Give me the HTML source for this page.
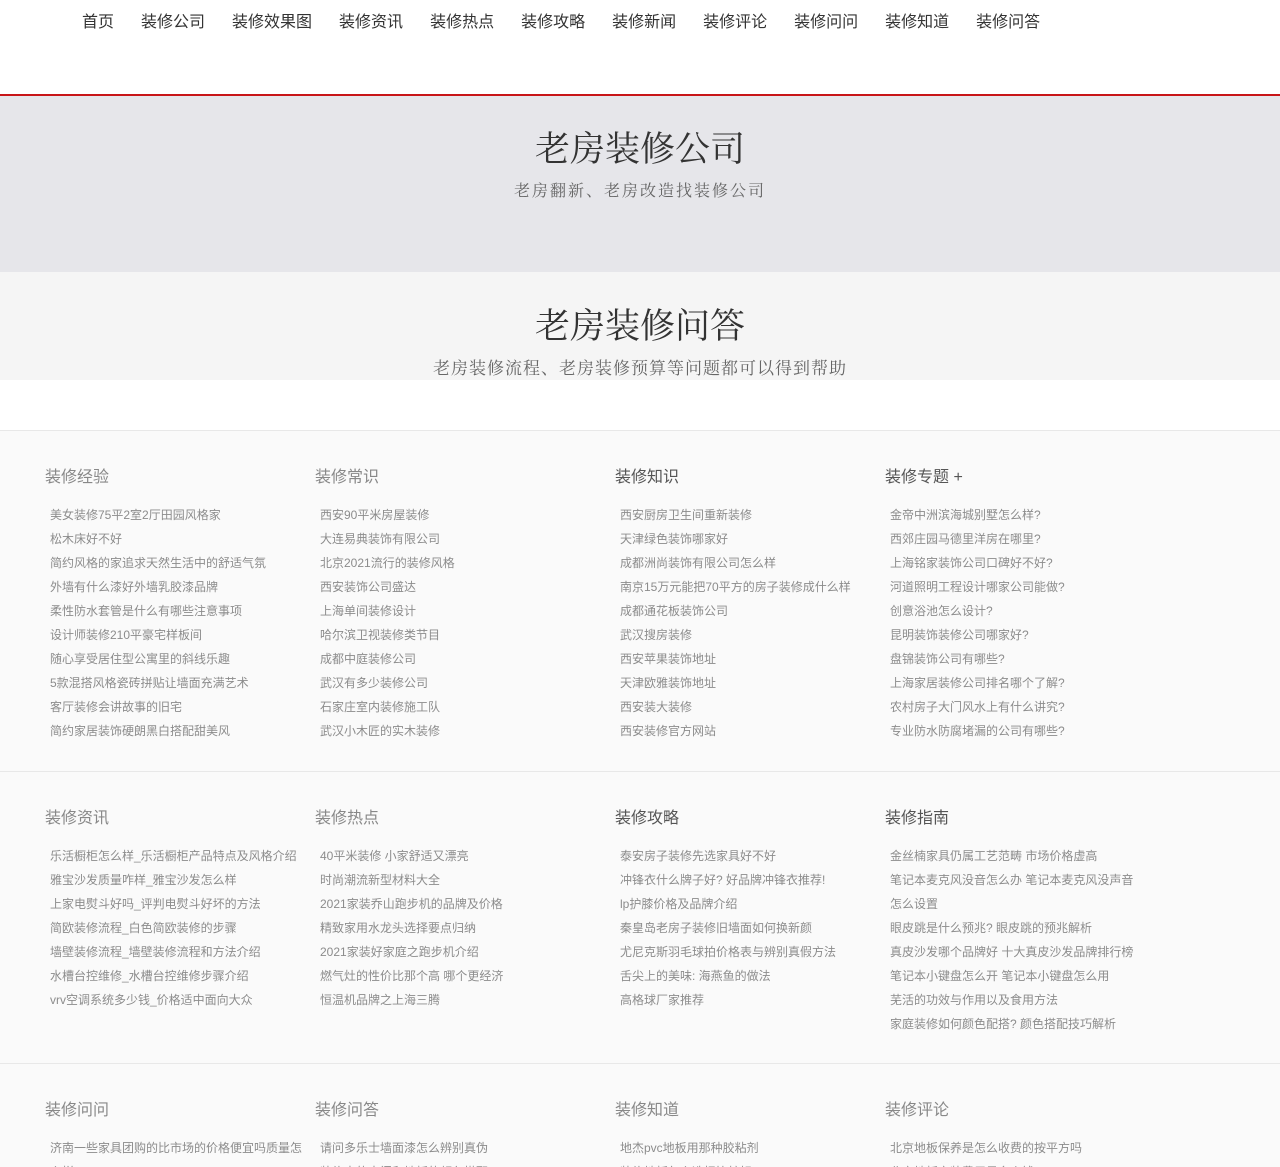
<!DOCTYPE html>
<html><head><meta charset="utf-8"><style>
*{margin:0;padding:0;box-sizing:border-box}
html,body{width:1280px;height:1167px;overflow:hidden}
body{background:#fff;font-family:"Liberation Sans","Noto Sans CJK SC",sans-serif;position:relative}
.nav{position:absolute;top:8px;left:82px;font-size:16px;color:#333;white-space:nowrap}
.nav span{margin-right:27px}
.red{position:absolute;top:94px;left:0;width:1280px;height:2px;background:#c81518}
.b1{position:absolute;top:96px;left:0;width:1280px;height:176px;background:#e6e6ea;text-align:center}
.b2{position:absolute;top:272px;left:0;width:1280px;height:108px;background:#f5f5f5;text-align:center}
.t{font-family:"Liberation Serif","Noto Serif CJK SC",serif;font-size:35px;color:#333;letter-spacing:0}
.s{font-family:"Liberation Serif","Noto Serif CJK SC",serif;color:#666;letter-spacing:1px}
.sec{position:absolute;left:0;width:1280px;background:#fafafa;border-top:1px solid #e8e8e8;overflow:hidden}
.col{position:absolute}
.col h3{font-weight:normal;font-size:16px;color:#888;height:35px;line-height:20px}
.col p{font-size:12px;color:#8c8c8c;line-height:24px;padding-left:5px;white-space:nowrap}
</style></head><body>
<div class="nav"><span>首页</span><span>装修公司</span><span>装修效果图</span><span>装修资讯</span><span>装修热点</span><span>装修攻略</span><span>装修新闻</span><span>装修评论</span><span>装修问问</span><span>装修知道</span><span>装修问答</span></div>
<div class="red"></div>
<div class="b1"><div class="t" style="padding-top:30px;line-height:48px">老房装修公司</div><div class="s" style="font-size:16px;margin-top:4px;letter-spacing:2px">老房翻新、老房改造找装修公司</div></div>
<div class="b2"><div class="t" style="padding-top:31px;line-height:48px">老房装修问答</div><div class="s" style="font-size:17px;margin-top:3px">老房装修流程、老房装修预算等问题都可以得到帮助</div></div>

<div class="sec" style="top:430px;height:342px">
<div class="col" style="left:45px;top:37px"><h3>装修经验</h3><p>美女装修75平2室2厅田园风格家</p><p>松木床好不好</p><p>简约风格的家追求天然生活中的舒适气氛</p><p>外墙有什么漆好外墙乳胶漆品牌</p><p>柔性防水套管是什么有哪些注意事项</p><p>设计师装修210平豪宅样板间</p><p>随心享受居住型公寓里的斜线乐趣</p><p>5款混搭风格瓷砖拼贴让墙面充满艺术</p><p>客厅装修会讲故事的旧宅</p><p>简约家居装饰硬朗黑白搭配甜美风</p></div>
<div class="col" style="left:315px;top:37px"><h3>装修常识</h3><p>西安90平米房屋装修</p><p>大连易典装饰有限公司</p><p>北京2021流行的装修风格</p><p>西安装饰公司盛达</p><p>上海单间装修设计</p><p>哈尔滨卫视装修类节目</p><p>成都中庭装修公司</p><p>武汉有多少装修公司</p><p>石家庄室内装修施工队</p><p>武汉小木匠的实木装修</p></div>
<div class="col" style="left:615px;top:37px"><h3 style="color:#555">装修知识</h3><p>西安厨房卫生间重新装修</p><p>天津绿色装饰哪家好</p><p>成都洲尚装饰有限公司怎么样</p><p>南京15万元能把70平方的房子装修成什么样</p><p>成都通花板装饰公司</p><p>武汉搜房装修</p><p>西安苹果装饰地址</p><p>天津欧雅装饰地址</p><p>西安装大装修</p><p>西安装修官方网站</p></div>
<div class="col" style="left:885px;top:37px"><h3 style="color:#555">装修专题 +</h3><p>金帝中洲滨海城别墅怎么样?</p><p>西郊庄园马德里洋房在哪里?</p><p>上海铭家装饰公司口碑好不好?</p><p>河道照明工程设计哪家公司能做?</p><p>创意浴池怎么设计?</p><p>昆明装饰装修公司哪家好?</p><p>盘锦装饰公司有哪些?</p><p>上海家居装修公司排名哪个了解?</p><p>农村房子大门风水上有什么讲究?</p><p>专业防水防腐堵漏的公司有哪些?</p></div>
</div>

<div class="sec" style="top:771px;height:293px">
<div class="col" style="left:45px;top:37px"><h3>装修资讯</h3><p>乐活橱柜怎么样_乐活橱柜产品特点及风格介绍</p><p>雅宝沙发质量咋样_雅宝沙发怎么样</p><p>上家电熨斗好吗_评判电熨斗好坏的方法</p><p>简欧装修流程_白色简欧装修的步骤</p><p>墙壁装修流程_墙壁装修流程和方法介绍</p><p>水槽台控维修_水槽台控维修步骤介绍</p><p>vrv空调系统多少钱_价格适中面向大众</p></div>
<div class="col" style="left:315px;top:37px"><h3>装修热点</h3><p>40平米装修 小家舒适又漂亮</p><p>时尚潮流新型材料大全</p><p>2021家装乔山跑步机的品牌及价格</p><p>精致家用水龙头选择要点归纳</p><p>2021家装好家庭之跑步机介绍</p><p>燃气灶的性价比那个高 哪个更经济</p><p>恒温机品牌之上海三腾</p></div>
<div class="col" style="left:615px;top:37px"><h3 style="color:#555">装修攻略</h3><p>泰安房子装修先选家具好不好</p><p>冲锋衣什么牌子好? 好品牌冲锋衣推荐!</p><p>lp护膝价格及品牌介绍</p><p>秦皇岛老房子装修旧墙面如何换新颜</p><p>尤尼克斯羽毛球拍价格表与辨别真假方法</p><p>舌尖上的美味: 海燕鱼的做法</p><p>高格球厂家推荐</p></div>
<div class="col" style="left:885px;top:37px"><h3 style="color:#555">装修指南</h3><p>金丝楠家具仍属工艺范畴 市场价格虚高</p><p>笔记本麦克风没音怎么办 笔记本麦克风没声音</p><p>怎么设置</p><p>眼皮跳是什么预兆? 眼皮跳的预兆解析</p><p>真皮沙发哪个品牌好 十大真皮沙发品牌排行榜</p><p>笔记本小键盘怎么开 笔记本小键盘怎么用</p><p>芜活的功效与作用以及食用方法</p><p>家庭装修如何颜色配搭? 颜色搭配技巧解析</p></div>
</div>

<div class="sec" style="top:1063px;height:104px">
<div class="col" style="left:45px;top:37px"><h3>装修问问</h3><p>济南一些家具团购的比市场的价格便宜吗质量怎</p><p>么样</p></div>
<div class="col" style="left:315px;top:37px"><h3>装修问答</h3><p>请问多乐士墙面漆怎么辨别真伪</p><p>装修中的木门和地板的颜色搭配</p></div>
<div class="col" style="left:615px;top:37px"><h3>装修知道</h3><p>地杰pvc地板用那种胶粘剂</p><p>装修地板怎么选择比较好</p></div>
<div class="col" style="left:885px;top:37px"><h3>装修评论</h3><p>北京地板保养是怎么收费的按平方吗</p><p>北京地板安装费用是多少钱</p></div>
</div>
</body></html>
